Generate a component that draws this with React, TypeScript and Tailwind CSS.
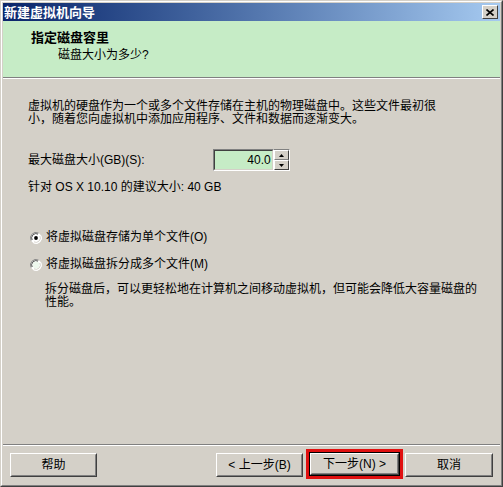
import React from "react";

const FONT = { fontFamily: '"Liberation Sans", "Noto Sans CJK SC", sans-serif' };

function Btn({ children, focused = false, w = "w-[87px]" }: { children: React.ReactNode; focused?: boolean; w?: string }) {
  return (
    <div className={`${w} h-[24px] ${focused ? "border border-black" : ""}`}>
      <div className="w-full h-full border border-t-white border-l-white border-r-[#404040] border-b-[#404040] bg-[#d4d0c8]">
        <div className="w-full h-full border border-t-[#d4d0c8] border-l-[#d4d0c8] border-r-[#808080] border-b-[#808080] flex items-center justify-center text-[12px] text-black leading-none">
          {children}
        </div>
      </div>
    </div>
  );
}

function Radio({ checked }: { checked: boolean }) {
  return (
    <svg width="12" height="12" viewBox="0 0 12 12" className="shrink-0">
      <circle cx="6" cy="6" r="5.5" fill="#ffffff" />
      <path d="M1.1 8.5 A5.5 5.5 0 0 1 8.5 1.1" stroke="#808080" strokeWidth="1" fill="none" />
      <path d="M2.2 8 A4.3 4.3 0 0 1 8 2.2" stroke="#404040" strokeWidth="1" fill="none" />
      <path d="M10.9 3.5 A5.5 5.5 0 0 1 3.5 10.9" stroke="#ffffff" strokeWidth="1" fill="none" />
      <path d="M9.8 4 A4.3 4.3 0 0 1 4 9.8" stroke="#d4d0c8" strokeWidth="1" fill="none" />
      <circle cx="6" cy="6" r="3.4" fill={checked ? "#ffffff" : "#eef8ee"} />
      {checked && <circle cx="6" cy="6" r="1.9" fill="#000000" />}
    </svg>
  );
}

export default function App() {
  return (
    <div style={FONT} className="w-[503px] h-[487px] border border-t-[#d4d0c8] border-l-[#d4d0c8] border-r-[#404040] border-b-[#404040]">
      <div className="w-full h-full border border-t-white border-l-white border-r-[#808080] border-b-[#808080] p-[1px] bg-[#d4d0c8] flex flex-col">
        {/* Title bar */}
        <div className="h-[18px] shrink-0 bg-gradient-to-r from-[#0a246a] to-[#a6caf0] flex items-center pl-[1px] pr-[2px]">
          <span className="text-white font-bold text-[13px] leading-none">新建虚拟机向导</span>
          <div className="flex-1" />
          <div className="w-[16px] h-[14px] border border-t-white border-l-white border-r-[#404040] border-b-[#404040] bg-[#d4d0c8] flex items-center justify-center">
            <svg width="8" height="7" viewBox="0 0 8 7">
              <path d="M0.5 0.5 L7.5 6.5 M7.5 0.5 L0.5 6.5" stroke="#000" strokeWidth="1.6" />
            </svg>
          </div>
        </div>
        {/* Header */}
        <div className="h-[56px] shrink-0 bg-[#c6ecc6] pt-[9px]">
          <div className="pl-[28px] text-[13px] font-bold leading-[15px] text-black">指定磁盘容里</div>
          <div className="pl-[55px] text-[12px] leading-[14px] mt-[3px] text-black">磁盘大小为多少?</div>
        </div>
        <div className="h-[1px] bg-[#808080] shrink-0" />
        <div className="h-[1px] bg-white shrink-0" />
        {/* Body */}
        <div className="flex-1 pl-[25px] text-[12px] text-black flex flex-col">
          <div className="mt-[21px] leading-[13px]">
            <div>虚拟机的硬盘作为一个或多个文件存储在主机的物理磁盘中。这些文件最初很</div>
            <div>小，随着您向虚拟机中添加应用程序、文件和数据而逐渐变大。</div>
          </div>
          <div className="mt-[23px] h-[22px] flex items-center">
            <span className="leading-[13px]">最大磁盘大小(GB)(S):</span>
            <div className="ml-[68px] flex h-[22px]">
              <div className="w-[61px] h-[22px] border border-t-[#808080] border-l-[#808080] border-r-white border-b-white">
                <div className="w-full h-full border border-t-[#404040] border-l-[#404040] border-r-[#d4d0c8] border-b-[#d4d0c8] bg-[#c6ecc6] flex items-center justify-end pr-[1px] leading-none">
                  40.0
                </div>
              </div>
              <div className="w-[16px] h-[22px] flex flex-col border-t border-b border-t-[#808080] border-b-white border-r border-r-white">
                <div className="flex-1 bg-[#d4d0c8] border border-t-white border-l-white border-r-[#404040] border-b-[#808080] flex items-center justify-center">
                  <svg width="5" height="3" viewBox="0 0 5 3"><path d="M2.5 0 L5 3 L0 3 Z" fill="#000" /></svg>
                </div>
                <div className="flex-1 bg-[#d4d0c8] border border-t-white border-l-white border-r-[#404040] border-b-[#404040] flex items-center justify-center">
                  <svg width="5" height="3" viewBox="0 0 5 3"><path d="M0 0 L5 0 L2.5 3 Z" fill="#000" /></svg>
                </div>
              </div>
            </div>
          </div>
          <div className="mt-[10px] leading-[13px]">针对 OS X 10.10 的建议大小: 40 GB</div>
          <div className="mt-[37px] flex items-center h-[13px] ml-[2px]">
            <Radio checked={true} />
            <span className="ml-[4px] leading-[13px]">将虚拟磁盘存储为单个文件(O)</span>
          </div>
          <div className="mt-[14px] flex items-center h-[13px] ml-[2px]">
            <Radio checked={false} />
            <span className="ml-[4px] leading-[13px]">将虚拟磁盘拆分成多个文件(M)</span>
          </div>
          <div className="mt-[12px] pl-[17px] leading-[13px]">
            <div>拆分磁盘后，可以更轻松地在计算机之间移动虚拟机，但可能会降低大容量磁盘的</div>
            <div>性能。</div>
          </div>
        </div>
        {/* Footer */}
        <div className="h-[1px] bg-[#808080] shrink-0" />
        <div className="h-[1px] bg-white shrink-0" />
        <div className="h-[38px] shrink-0 flex items-start pt-[7px] pl-[7px] pr-[7px]">
          <Btn>帮助</Btn>
          <div className="flex-1" />
          <Btn>&lt; 上一步(B)</Btn>
          <div className="ml-[3px] -mt-[4px] border-[3px] border-[#e01010] p-0">
            <Btn focused w="w-[91px]">下一步(N) &gt;</Btn>
          </div>
          <div className="ml-[2px]">
            <Btn w="w-[88px]">取消</Btn>
          </div>
        </div>
      </div>
    </div>
  );
}
